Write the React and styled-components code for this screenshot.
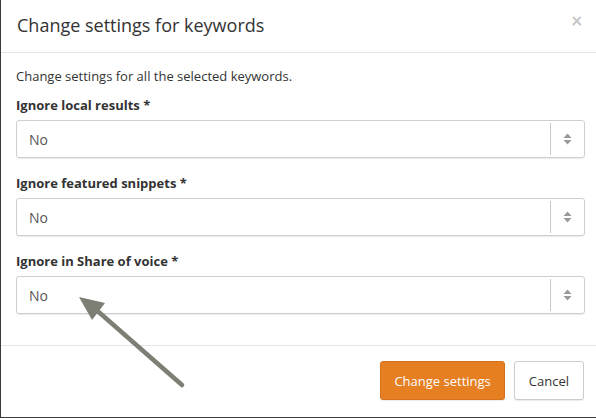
import React from "react"
import styled, { createGlobalStyle } from "styled-components"

const GlobalStyle = createGlobalStyle`
  html, body {
    margin: 0;
    padding: 0;
    overflow: hidden;
    background: #3a3a3a;
  }
  body {
    font-family: "Open Sans", "Liberation Sans", sans-serif;
    color: #333;
  }
`

const Modal = styled.div`
  margin-left: 1px;
  width: 595px;
  height: 417px;
  background: #fff;
  position: relative;
  display: flex;
  flex-direction: column;
  box-sizing: border-box;
`

const Header = styled.div`
  height: 53px;
  box-sizing: border-box;
  border-bottom: 1px solid #e5e5e5;
  display: flex;
  align-items: center;
  justify-content: space-between;
  padding: 0 13px 2px 16px;
`

const Title = styled.h4`
  margin: 0;
  font-size: 18px;
  font-weight: 400;
  color: #333;
`

const Close = styled.button`
  border: none;
  background: none;
  padding: 0;
  margin-top: -8px;
  font-family: "DejaVu Sans", sans-serif;
  font-size: 15px;
  font-weight: 700;
  color: #c4c4c4;
  cursor: pointer;
`

const Body = styled.div`
  padding: 14px 11px 31px 15px;
  border-bottom: 1px solid #e5e5e5;
`

const Intro = styled.p`
  margin: 0 0 11px;
  font-size: 13px;
  line-height: 18px;
`

const Group = styled.div`
  margin-bottom: ${({ last }) => (last ? "0" : "16px")};
`

const Label = styled.label`
  display: block;
  font-size: 13px;
  line-height: 19px;
  font-weight: 700;
  margin-bottom: 5px;
`

const Select = styled.div`
  height: 38px;
  box-sizing: border-box;
  border: 1px solid #cfcfcf;
  border-radius: 3px;
  box-shadow: 0 1px 1px rgba(0, 0, 0, 0.08);
  display: flex;
  align-items: center;
`

const Value = styled.span`
  flex: 1;
  padding-left: 12px;
  font-size: 14px;
  color: #555;
`

const Divider = styled.span`
  width: 1px;
  height: 32px;
  background: #c8c8c8;
`

const Caret = styled.span`
  width: 33px;
  display: flex;
  justify-content: center;
  align-items: center;
`

const Footer = styled.div`
  display: flex;
  justify-content: flex-end;
  gap: 9px;
  padding: 15px 12px 0 0;
`

const Button = styled.button`
  height: 39px;
  box-sizing: border-box;
  padding: 0 ${({ primary }) => (primary ? "13px" : "14px")};
  border-radius: 3px;
  font-family: "Open Sans", "Liberation Sans", sans-serif;
  font-size: 13px;
  border: 1px solid ${({ primary }) => (primary ? "#d4711c" : "#ccc")};
  background: ${({ primary }) => (primary ? "#e67e22" : "#fff")};
  color: ${({ primary }) => (primary ? "#fff" : "#333")};
  box-shadow: 0 1px 1px rgba(0, 0, 0, 0.08);
  cursor: pointer;
`

const Pointer = styled.svg`
  position: absolute;
  left: 0;
  top: 0;
  pointer-events: none;
`

const fields = ["Ignore local results *", "Ignore featured snippets *", "Ignore in Share of voice *"]

const SelectBox = ({ value }) => (
  <Select>
    <Value>{value}</Value>
    <Divider />
    <Caret>
      <svg width="9" height="12" viewBox="0 0 9 12">
        <path d="M4.5 0.5 L8.5 5 L0.5 5 Z" fill="#9a9a9a" />
        <path d="M0.5 7 L8.5 7 L4.5 11.5 Z" fill="#9a9a9a" />
      </svg>
    </Caret>
  </Select>
)

const App = () => (
  <>
    <GlobalStyle />
    <Modal>
      <Header>
        <Title>Change settings for keywords</Title>
        <Close>×</Close>
      </Header>
      <Body>
        <Intro>Change settings for all the selected keywords.</Intro>
        {fields.map((f, i) => (
          <Group key={f} last={i === fields.length - 1}>
            <Label>{f}</Label>
            <SelectBox value="No" />
          </Group>
        ))}
      </Body>
      <Footer>
        <Button primary>Change settings</Button>
        <Button>Cancel</Button>
      </Footer>
      <Pointer width="595" height="417">
        <line x1="181" y1="385" x2="92" y2="307" stroke="#7e7f74" strokeWidth="4.5" strokeLinecap="round" />
        <path d="M78 297 L104 303 L91 320 Z" fill="#7e7f74" />
      </Pointer>
    </Modal>
  </>
)

export default App
